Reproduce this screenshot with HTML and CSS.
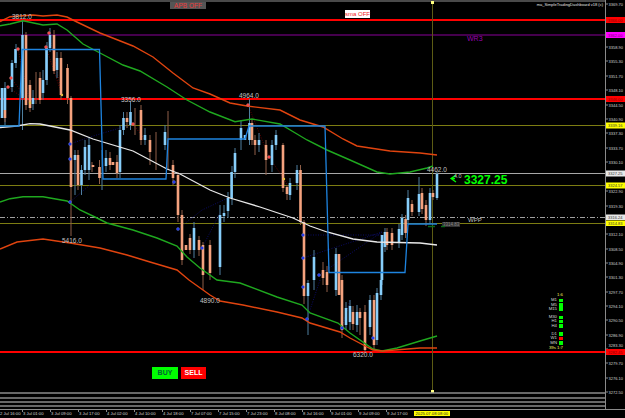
FILE: index.html
```html
<!DOCTYPE html>
<html lang="en">
<head>
    <meta charset="UTF-8">
    <meta name="viewport" content="width=device-width, initial-scale=1.0">
    <title>XAUUSD chart</title>
    <link rel="stylesheet" href="styles.css">
</head>
<body>
    <div class="terminal">
        <div class="plot">
            <svg class="plot-svg" width="605" height="409" viewBox="0 0 605 409">
                <!-- levels -->
                <path class="lvl-red" d="M0 20H605M0 99H605M0 352H605"/>
                <path class="lvl-purple" d="M0 35H605"/>
                <path class="lvl-olive" d="M0 125.5H605M0 185.5H605M0 223.5H605"/>
                <path class="lvl-silver" d="M0 173.5H605"/>
                <path class="lvl-dash" d="M0 217.5H605"/>
                <path class="cursor" d="M432.5 2V392"/>

                <!-- swing zigzags -->
                <path class="zig-red" d="M8 87L30 103M11 78L30 103M18 49L30 103M46 47L62 95M49 33L62 95M133 124L145 140M248 105L269 157L284 179L290 190"/>
                <path class="zig-blue" d="M70 144L90 137L133 124M70 202L90 185M178 229L202 210L228 198M202 248L220 213M303 235H382M303 258L382 232M319 275L382 232M307 319L320 280M342 328L350 300"/>

                <!-- candles -->
                <path class="wick-up" d="M5 82V125M12 60V92M16 44V68M22.500 20V130M33 90V110M43 70V100M47 42V85M50 28V52M57 52V78M75 150V195M81.500 165V195M85 140V175M89 138V180M102 150V190M106 150V172M120 125V178M123.500 112V135M130.500 102V130M145 128V145M165 125V150M194 222V258M220 205V275M224 205V222M228 192V218M232 166V205M235 148V178M241 120V150M249.500 99V145M259 133V152M272 140V172M276 130V150M290 178V200M297 165V190M308 280V335M314 250V290M336 248V296M346 302V330M350 300V330M357 305V332M370 295V335M377 288V345M381 272V300M382 235V285M385 228V252M399 224V248M402 214V240M408 190V224M419 177V216M430 188V224M437 172V200"/>
                <path class="wick-down" d="M5 105V122M26 32V110M30 80V112M36 72V104M40 72V104M54 30V74M61 52V100M67.500 64V104M71 96V236M78 150V190M92 162V172M99.500 160V184M110 152V170M117 155V178M127 112V128M135 108V135M141 105V145M150 135V165M156 132V170M168 111V170M173 160V185M178 172V222M182 210V265M190 234V254M199 236V256M203 242V290M210 240V280M252 120V145M255 135V155M266 140V175M283 143V192M287 185V200M300.500 165V225M304 220V304M323 262V285M327 266V292M342 275V338M353 306V330M360 308V335M365 305V352M374 295V350M387 228V250M392 228V250M405.600 215V238M412 200V216M422 188V214M426 200V226M433 190V200"/>
                <path class="body-up" d="M2 88V118M5 88V110M12 63V87M15.500 49V63M22.500 35V98M33 98V104M43 80V93M46.500 48V80M50 35V48M57 58V70M75 155V160M81.500 170V185M85 147V170M89 145V170M106 158V166M120 130V172M123.500 118V130M130.500 112V125M145 135V140M165 132V145M194 228V250M220 215V267M224 213V216M228 198V211M231.600 172V198M235 153V172M241 128V140M245 135V140M249.500 123V140M259 140V145M272 145V165M276 135V145M290 183V195M297 170V183M308 283V296M314 257V280M336 254V290M346 308V325M350 306V322M357 312V325M370 300V327M377 293V340M381 280V295M382 235V280M385 232V247M399 229V243M402 218V235M408 198V220M419 194V212M430 193V220M437 174V198"/>
                <path class="body-down" d="M5 110V118M26 35V105M30 85V108M40 78V100M54 35V71M61 58V95M67.500 68V98M71 98V187M78 155V185M93 165V167M99.500 167V178M110 158V165M113 162V165M117 162V173M127 118V122M141 110V140M150 140V152M173 165V178M178 175V215M182 215V260M186 245V250M190 238V250M199 240V250M203 245V275M210 245V273M252 123V140M255 140V145M266 145V160M283 145V188M287 187V194M300.500 170V222M304 222V296M323 270V278M327 272V285M339 254V295M342 280V330M353 312V324M360 312V318M365 312V350M374 300V345M387 232V245M392 233V245M405.600 219V233M412 204V212M422 193V209M426 205V220M433 193V197"/>

                <!-- moving averages and bands -->
                <polyline class="ma-white" points="0,127.500 17,126 30,123.700 40,124 70,130 93,139 133,151 167,169 180,174 210,190 230,198 260,207 293,218 310,226 327,232 353,239 377,242 420,243 437,245"/>
                <polyline class="ma-green" points="0,25.700 10,24 23,20.700 43,25 57,24 67,30 83,44 100,53 123,65 140,71 167,87 187,100 210,112 235,121.700 252,119 280,124 297,134 307,140 327,150 350,160 377,172 390,174 410,172 427,168 433,166"/>
                <polyline class="ma-green" points="0,202 10,198.700 23,196.700 43,196.700 67,201 80,210 97,218 107,223 133,230 157,238 177,246 187,257 200,268 217,280 240,283 277,297 302,305 310,313 338,323 350,333 373,349 382,351 397,348 420,341 437,336"/>
                <polyline class="ma-orange" points="0,21.600 10,16.700 33,15 43,16 57,15 67,17 77,22 100,33 133,46 153,57 173,73 193,88 210,94 230,103 247,106 280,110 300,120 323,127 343,139 357,146 390,151 420,153 437,155"/>
                <polyline class="ma-orange" points="0,249 17,242 43,239 70,243 100,248 127,255 150,262 177,270 189,280 210,295 220,301 243,305 277,312 302,318 310,323 340,332 350,338 373,350 383,351 420,348 437,348"/>

                <!-- step line -->
                <polyline class="step" points="0,126 19,126 22,49.500 99.500,49.500 103,179 166,179 168,139 245,139 249,126 325,126 329,272.500 405,272.500 408,224 437,224"/>

                <!-- swing points -->
                <g class="dot-red">
                    <circle cx="8" cy="87" r="1.500"/><circle cx="11" cy="78" r="1.500"/><circle cx="18" cy="49" r="1.500"/>
                    <circle cx="46" cy="47" r="1.500"/><circle cx="49" cy="33" r="1.500"/><circle cx="133" cy="124" r="1.500"/>
                    <circle cx="248" cy="105" r="1.500"/><circle cx="269" cy="157" r="1.500"/>
                </g>
                <g class="dot-blue">
                    <circle cx="70" cy="144" r="1.500"/><circle cx="70" cy="159" r="1.500"/><circle cx="70" cy="202" r="1.500"/>
                    <circle cx="174" cy="182" r="1.500"/><circle cx="178" cy="229" r="1.500"/><circle cx="202" cy="248" r="1.500"/>
                    <circle cx="303" cy="235" r="1.500"/><circle cx="303" cy="258" r="1.500"/><circle cx="319" cy="275" r="1.500"/>
                    <circle cx="303" cy="287" r="1.500"/><circle cx="307" cy="319" r="1.500"/><circle cx="342" cy="328" r="1.500"/>
                    <circle cx="373" cy="338" r="1.500"/>
                </g>
                <g class="dot-gold">
                    <circle cx="30" cy="103" r="1.200"/><circle cx="62" cy="95" r="1.200"/><circle cx="284" cy="179" r="1.200"/>
                </g>
                <path class="cursor-end" d="M431 1h3v3h-3zM431 390h3v3h-3z"/>

                <!-- swing volumes -->
                <text class="swing" x="12" y="18.500">3812.0</text>
                <text class="swing" x="121" y="101.500">3356.0</text>
                <text class="swing" x="239" y="97.500">4964.0</text>
                <text class="swing" x="62" y="242.500">5416.0</text>
                <text class="swing" x="200" y="303">4890.0</text>
                <text class="swing" x="353" y="357">6320.0</text>
                <text class="swing" x="427" y="171.500">4462.0</text>

                <text class="name-r3" x="467" y="40.500">WR3</text>
                <text class="name-pp" x="468" y="222">WPP</text>

                <!-- last price -->
                <path class="price-arrow" d="M456 175L451 178.500L456 182M451 178.500H455"/>
                <text class="price-lots" x="454" y="178">4.0</text>
                <text class="price-big" x="464" y="184">3327.25</text>

                <rect class="mini-tag" x="442" y="222" width="18" height="5"/>
                <text class="mini-text" x="443" y="226.200">3314.83</text>
                <path class="mini-green" d="M428 226.500H435M441 226.500H445"/>

                <!-- bottom separators -->
                <path class="stripes" d="M0 393H605M0 398H605M0 402H605M0 406H605"/>
            </svg>

            <div class="btn-apb">APB OFF</div>
            <div class="btn-sma">sma OFF</div>
            <div class="dash-title">ma_SimpleTradingDashboard v18 (c)</div>

            <div class="trade-btns">
                <div class="btn-buy">BUY</div>
                <div class="btn-sell">SELL</div>
            </div>

            <div class="tf-panel">
                <div class="tf-row tf-head"><span>1:6</span></div>
                <div class="tf-group">
                    <div class="tf-row"><span>M1</span><i class="up"></i></div>
                    <div class="tf-row"><span>M5</span><i class="up"></i></div>
                    <div class="tf-row"><span>M15</span><i class="up"></i></div>
                </div>
                <div class="tf-group">
                    <div class="tf-row"><span>M30</span><i class="up"></i></div>
                    <div class="tf-row"><span>H1</span><i class="up"></i></div>
                    <div class="tf-row"><span>H4</span><i class="up"></i></div>
                </div>
                <div class="tf-group">
                    <div class="tf-row"><span>D1</span><i class="up"></i></div>
                    <div class="tf-row"><span>W1</span><i class="down"></i></div>
                    <div class="tf-row"><span>MN</span><i class="up"></i></div>
                </div>
                <div class="tf-row tf-foot"><span>39s 1:7</span></div>
            </div>
        </div>

        <svg class="price-axis" width="20" height="409" viewBox="0 0 20 409">
            <path class="ticks" d="M0 4H3M0 47H3M0 61H3M0 76H3M0 90H3M0 105H3M0 119H3M0 133H3M0 148H3M0 162H3M0 191H3M0 206H3M0 234H3M0 249H3M0 263H3M0 277H3M0 292H3M0 306H3M0 320H3M0 335H3M0 349H3M0 363H3M0 378H3M0 392H3"/>
            <text class="tick" x="3.500" y="5.500">3369.70</text>
            <text class="tick" x="3.500" y="48.500">3358.90</text>
            <text class="tick" x="3.500" y="62.500">3355.30</text>
            <text class="tick" x="3.500" y="77.500">3351.70</text>
            <text class="tick" x="3.500" y="91.500">3348.10</text>
            <text class="tick" x="3.500" y="106.500">3344.50</text>
            <text class="tick" x="3.500" y="120.500">3340.90</text>
            <text class="tick" x="3.500" y="134.500">3337.30</text>
            <text class="tick" x="3.500" y="149.500">3333.70</text>
            <text class="tick" x="3.500" y="163.500">3330.10</text>
            <text class="tick" x="3.500" y="192.500">3322.90</text>
            <text class="tick" x="3.500" y="207.500">3319.30</text>
            <text class="tick" x="3.500" y="235.500">3312.10</text>
            <text class="tick" x="3.500" y="250.500">3308.50</text>
            <text class="tick" x="3.500" y="264.500">3304.90</text>
            <text class="tick" x="3.500" y="278.500">3301.30</text>
            <text class="tick" x="3.500" y="293.500">3297.70</text>
            <text class="tick" x="3.500" y="307.500">3294.10</text>
            <text class="tick" x="3.500" y="321.500">3290.50</text>
            <text class="tick" x="3.500" y="336.500">3286.90</text>
            <text class="tick" x="3.500" y="347">3283.30</text>
            <text class="tick" x="3.500" y="364.500">3279.70</text>
            <text class="tick" x="3.500" y="379.500">3276.10</text>
            <text class="tick" x="3.500" y="393.500">3272.50</text>

            <rect class="tag-red" x="1" y="17" width="19" height="6"/>
            <text class="tag-text on-red" x="3" y="21.500">3366.00</text>
            <rect class="tag-magenta" x="1" y="32" width="19" height="6"/>
            <text class="tag-text on-magenta" x="3" y="36.500">3362.00</text>
            <rect class="tag-red" x="1" y="96" width="19" height="6"/>
            <text class="tag-text on-red" x="3" y="100.500">3346.00</text>
            <rect class="tag-yellow" x="1" y="122.500" width="19" height="6"/>
            <text class="tag-text" x="3" y="127">3339.16</text>
            <rect class="tag-white" x="1" y="170.500" width="19" height="6"/>
            <text class="tag-text" x="3" y="175">3327.25</text>
            <rect class="tag-yellow" x="1" y="182.500" width="19" height="6"/>
            <text class="tag-text" x="3" y="187">3324.57</text>
            <rect class="tag-white" x="1" y="214.500" width="19" height="5.500"/>
            <text class="tag-text" x="3" y="218.800">3316.24</text>
            <rect class="tag-yellow" x="1" y="220.500" width="19" height="5.500"/>
            <text class="tag-text" x="3" y="224.800">3314.83</text>
            <rect class="tag-red" x="1" y="349" width="19" height="6"/>
            <text class="tag-text on-red" x="3" y="353.500">3282.45</text>
        </svg>

        <div class="time-axis">
            <span class="time first">2 Jul 16:00</span>
            <span class="time">3 Jul 01:00</span>
            <span class="time">3 Jul 09:00</span>
            <span class="time">3 Jul 17:00</span>
            <span class="time">4 Jul 02:00</span>
            <span class="time">4 Jul 10:00</span>
            <span class="time">4 Jul 18:00</span>
            <span class="time">7 Jul 07:00</span>
            <span class="time">7 Jul 15:00</span>
            <span class="time">7 Jul 23:00</span>
            <span class="time">8 Jul 08:00</span>
            <span class="time">8 Jul 16:00</span>
            <span class="time">9 Jul 01:00</span>
            <span class="time">9 Jul 09:00</span>
            <span class="time">9 Jul 17:00</span>
            <span class="time-tag">2025.07.08 08:00</span>
        </div>
    </div>
</body>
</html>
```

FILE: styles.css
```css
body {
    margin: 0;
    background-color: #000;
    font-family: "Liberation Sans", Arial, sans-serif;
    overflow: hidden;
}
svg {
    display: block;
}
.terminal {
    display: grid;
    grid-template-columns: 605px 20px;
    grid-template-rows: 409px 9px;
    width: 625px;
    height: 418px;
}
.plot {
    position: relative;
    width: 605px;
    height: 409px;
    box-shadow: inset 0 2px 0 #4a4a4a;
}
.plot-svg {
    fill: none;
}

/* levels */
.lvl-red {
    stroke: #f00;
    stroke-width: 2;
}
.lvl-purple {
    stroke: #45004d;
    stroke-width: 2;
}
.lvl-olive {
    stroke: #7d7d12;
    stroke-width: 1;
}
.lvl-silver {
    stroke: #a8a8a8;
    stroke-width: 1;
}
.lvl-dash {
    stroke: #a0a0a0;
    stroke-width: 1;
    stroke-dasharray: 5 2 1 2;
}
.cursor {
    stroke: #5c5c14;
    stroke-width: 1;
}
.cursor-end {
    fill: #ffff80;
}

/* candles */
.wick-up {
    stroke: #4f7f9f;
    stroke-width: 1;
}
.wick-down {
    stroke: #8f5f48;
    stroke-width: 1;
}
.body-up {
    stroke: #87cefa;
    stroke-width: 2.6;
}
.body-down {
    stroke: #f4a27e;
    stroke-width: 2.6;
}
.zig-red {
    stroke: #8b0000;
    stroke-width: 0.7;
    stroke-dasharray: 1 1.500;
}
.zig-blue {
    stroke: #10108f;
    stroke-width: 0.7;
    stroke-dasharray: 1 1.500;
}

/* curves */
.ma-white {
    stroke: #e8e8e8;
    stroke-width: 1.300;
}
.ma-green {
    stroke: #1fa81f;
    stroke-width: 1.400;
}
.ma-orange {
    stroke: #e0440f;
    stroke-width: 1.400;
}
.step {
    stroke: #1e84e0;
    stroke-width: 1.300;
}
.dot-red {
    fill: #ff4040;
    stroke: #c08080;
    stroke-width: 0.400;
}
.dot-blue {
    fill: #2030f0;
    stroke: #7090d0;
    stroke-width: 0.400;
}
.dot-gold {
    fill: #e8c040;
}
.stripes {
    stroke: #8a8a8a;
    stroke-width: 1.500;
}

/* text on the chart */
.swing {
    fill: #c4c4c4;
    font-size: 6.500px;
}
.name-r3 {
    fill: #9a00b0;
    font-size: 7px;
}
.name-pp {
    fill: #c0c0c0;
    font-size: 6px;
}
.price-big {
    fill: #0f0;
    font-size: 12px;
    font-weight: bold;
}
.price-lots {
    fill: #c0c0c0;
    font-size: 5.500px;
}
.price-arrow {
    stroke: #0f0;
    stroke-width: 1.300;
}
.mini-tag {
    fill: #333;
}
.mini-text {
    fill: #888;
    font-size: 4.500px;
}
.mini-green {
    stroke: #0a6a1a;
    stroke-width: 1.500;
}

/* buttons */
.btn-apb {
    position: absolute;
    left: 170px;
    top: 2px;
    width: 36px;
    height: 7px;
    background-color: #555;
    color: #ee3c3c;
    font-size: 6.500px;
    line-height: 7px;
    text-align: center;
    white-space: nowrap;
}
.btn-sma {
    position: absolute;
    left: 345px;
    top: 10px;
    width: 25px;
    height: 8px;
    background-color: #fff;
    color: #f02020;
    font-size: 6px;
    line-height: 8px;
    text-align: center;
    white-space: nowrap;
}
.dash-title {
    position: absolute;
    right: 2px;
    top: 2px;
    color: #e0e0e0;
    font-size: 4px;
    line-height: 6px;
    white-space: nowrap;
}
.trade-btns {
    position: absolute;
    left: 152px;
    top: 367px;
    display: flex;
    gap: 3px;
}
.btn-buy,
.btn-sell {
    width: 26px;
    height: 12px;
    font-size: 7px;
    font-weight: bold;
    line-height: 12px;
    text-align: center;
}
.btn-buy {
    background-color: #0f0;
    color: #063;
}
.btn-sell {
    width: 25px;
    background-color: #f00;
    color: #fff;
}

/* timeframe panel */
.tf-panel {
    position: absolute;
    right: 42px;
    top: 293px;
    display: flex;
    flex-direction: column;
    gap: 4px;
    width: 30px;
    color: #d8d8d8;
    font-size: 4.300px;
}
.tf-group {
    display: flex;
    flex-direction: column;
}
.tf-row {
    display: flex;
    justify-content: flex-end;
    align-items: center;
    gap: 1px;
    height: 4.300px;
    line-height: 4.300px;
}
.tf-row i {
    width: 4px;
    height: 3.600px;
    margin-left: 1px;
}
.tf-row i.up {
    background-color: #0f0;
}
.tf-row i.down {
    background-color: #f00;
}
.tf-head {
    margin-bottom: -3px;
    color: #f4f460;
}
.tf-foot {
    margin-top: -3.300px;
    color: #f4f460;
    white-space: nowrap;
}

/* axes */
.price-axis {
    fill: none;
    box-shadow: inset 1px 0 0 #8a8a8a;
}
.ticks {
    stroke: #8a8a8a;
    stroke-width: 1;
}
.tick {
    fill: #d4d4d4;
    font-size: 4px;
}
.tag-text {
    fill: #333;
    font-size: 4px;
}
.tag-text.on-red {
    fill: #800;
}
.tag-text.on-magenta {
    fill: #707;
}
.tag-red {
    fill: #f00;
}
.tag-magenta {
    fill: #f0f;
}
.tag-yellow {
    fill: #ff0;
}
.tag-white {
    fill: #e8e8e8;
}
.time-axis {
    grid-column: 1 / 3;
    display: flex;
    border-top: 1px solid #8a8a8a;
    height: 8px;
    color: #d4d4d4;
    font-size: 4.200px;
    line-height: 7px;
}
.time {
    width: 28px;
    padding-left: 1px;
    box-sizing: border-box;
    white-space: nowrap;
    background: linear-gradient(#8a8a8a, #8a8a8a) no-repeat 0 0 / 1px 2px;
}
.time.first {
    width: 22px;
    padding-left: 0;
    background: none;
}
.time-tag {
    padding: 0 1.500px;
    height: 5px;
    line-height: 5px;
    margin-top: 1px;
    background-color: #ff0;
    color: #222;
    white-space: nowrap;
}
```
